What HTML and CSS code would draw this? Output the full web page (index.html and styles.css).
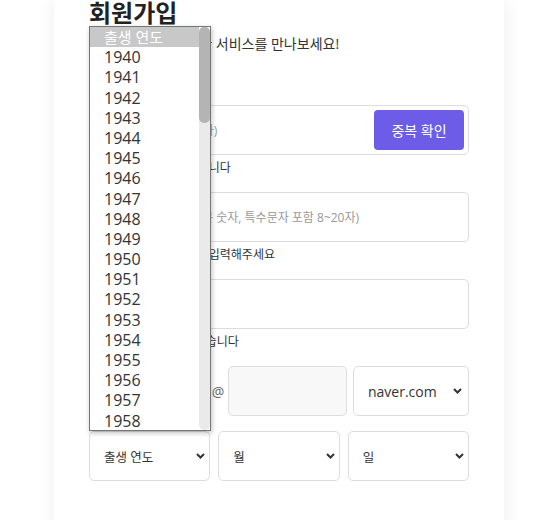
FILE: index.html
```html
<!DOCTYPE html>
<html lang="ko">
<head>
<meta charset="utf-8">
<title>회원가입</title>
<link rel="stylesheet" href="styles.css">
</head>
<body>
<div class="page">
  <div class="card">
    <h1 class="title">회원가입</h1>
    <p class="subtitle">지금 가입하고 다양한 서비스를 만나보세요!</p>

    <div class="field field-first">
      <div class="input-box">
        <input class="text-input" type="text" placeholder="아이디 입력 (6 ~ 20자)">
        <button class="check-btn" type="button">중복 확인</button>
      </div>
      <p class="help">사용할 수 있는 아이디입니다</p>
    </div>

    <div class="field">
      <div class="input-box">
        <input class="text-input" type="password" placeholder="비밀번호를 입력 (영문 숫자, 특수문자 포함 8~20자)">
      </div>
      <p class="help">안전한 비밀번호 조합을 입력해주세요</p>
    </div>

    <div class="field">
      <div class="input-box">
        <input class="text-input" type="password" placeholder="비밀번호 재입력">
      </div>
      <p class="help">비밀번호가 일치하지 않습니다</p>
    </div>

    <div class="email-row">
      <div class="input-box email-id"></div>
      <span class="at">@</span>
      <div class="input-box email-domain"></div>
      <div class="select select-domain">
        <span>naver.com</span>
        <svg class="chev" width="9" height="6" viewBox="0 0 9 6"><polyline points="1,1 4.5,4.5 8,1" fill="none" stroke="#333" stroke-width="2"/></svg>
      </div>
    </div>

    <div class="birth-row">
      <div class="select">
        <span>출생 연도</span>
        <svg class="chev" width="9" height="6" viewBox="0 0 9 6"><polyline points="1,1 4.5,4.5 8,1" fill="none" stroke="#333" stroke-width="2"/></svg>
      </div>
      <div class="select">
        <span>월</span>
        <svg class="chev" width="9" height="6" viewBox="0 0 9 6"><polyline points="1,1 4.5,4.5 8,1" fill="none" stroke="#333" stroke-width="2"/></svg>
      </div>
      <div class="select">
        <span>일</span>
        <svg class="chev" width="9" height="6" viewBox="0 0 9 6"><polyline points="1,1 4.5,4.5 8,1" fill="none" stroke="#333" stroke-width="2"/></svg>
      </div>
    </div>

    <div class="listbox">
      <ul class="options">
        <li class="option selected">출생 연도</li>
        <li class="option">1940</li>
        <li class="option">1941</li>
        <li class="option">1942</li>
        <li class="option">1943</li>
        <li class="option">1944</li>
        <li class="option">1945</li>
        <li class="option">1946</li>
        <li class="option">1947</li>
        <li class="option">1948</li>
        <li class="option">1949</li>
        <li class="option">1950</li>
        <li class="option">1951</li>
        <li class="option">1952</li>
        <li class="option">1953</li>
        <li class="option">1954</li>
        <li class="option">1955</li>
        <li class="option">1956</li>
        <li class="option">1957</li>
        <li class="option">1958</li>
        <li class="option">1959</li>
      </ul>
      <div class="scrollbar"><div class="thumb"></div></div>
    </div>
  </div>
</div>
</body>
</html>
```

FILE: styles.css
```css
html, body {
  margin: 0;
  padding: 0;
  background: #fff;
  overflow: hidden;
}

body {
  font-family: "Open Sans", "Noto Sans CJK KR", sans-serif;
  color: #333;
}

.page {
  height: 520px;
  overflow: hidden;
  padding-left: 54px;
}

.card {
  position: relative;
  width: 450px;
  min-height: 560px;
  box-sizing: border-box;
  padding: 0 35px 40px;
  background: #fff;
  box-shadow: 0 0 18px rgba(0, 0, 0, 0.07);
}

.title {
  margin: 0;
  font-size: 24px;
  line-height: 26px;
  font-weight: 700;
  color: #222;
}

.subtitle {
  margin: 9px 0 0;
  font-size: 14px;
  line-height: 18px;
  color: #333;
}

.field {
  margin-top: 17px;
}

.field-first {
  margin-top: 52px;
}

.input-box {
  display: flex;
  align-items: center;
  height: 50px;
  box-sizing: border-box;
  border: 1px solid #ddd;
  border-radius: 5px;
  padding: 0 4px 0 14px;
  background: #fff;
}

.text-input {
  flex: 1;
  min-width: 0;
  border: none;
  outline: none;
  background: transparent;
  padding: 0;
  font-family: "Open Sans", "Noto Sans CJK KR", sans-serif;
  font-size: 12px;
  color: #333;
}

.text-input::placeholder {
  color: #999;
}

.check-btn {
  width: 90px;
  height: 40px;
  border: none;
  border-radius: 4px;
  background: #6c5ce7;
  color: #fff;
  font-family: "Open Sans", "Noto Sans CJK KR", sans-serif;
  font-size: 14px;
  padding: 0;
}

.help {
  margin: 6px 0 0;
  font-size: 12px;
  line-height: 14px;
  color: #333;
}

.email-row {
  display: flex;
  height: 50px;
  margin-top: 17px;
}

.email-id {
  width: 119px;
  flex: none;
}

.at {
  width: 20px;
  flex: none;
  display: flex;
  align-items: center;
  justify-content: center;
  font-size: 14px;
  color: #666;
}

.email-domain {
  width: 119px;
  flex: none;
  background: #f8f8f8;
}

.select {
  display: flex;
  align-items: center;
  justify-content: space-between;
  height: 50px;
  box-sizing: border-box;
  border: 1px solid #ddd;
  border-radius: 5px;
  padding: 0 4px 0 14px;
  background: #fff;
  font-size: 12.5px;
  color: #333;
}

.select-domain {
  width: 116px;
  flex: none;
  margin-left: 6px;
  padding-right: 6px;
  font-size: 14px;
}

.chev {
  display: block;
  flex: none;
}

.birth-row {
  display: grid;
  grid-template-columns: 1fr 1fr 1fr;
  gap: 8px;
  margin-top: 15px;
}

.listbox {
  position: absolute;
  left: 35px;
  top: 26px;
  width: 122px;
  height: 405px;
  box-sizing: border-box;
  border: 1px solid #767676;
  background: #fff;
  display: flex;
  box-shadow: 1px 2px 5px rgba(0, 0, 0, 0.25);
  overflow: hidden;
}

.options {
  flex: 1;
  margin: 0;
  padding: 0;
  list-style: none;
  overflow: hidden;
}

.option {
  height: 20.2px;
  line-height: 20.2px;
  padding-left: 14px;
  font-size: 16px;
  color: #333;
  white-space: nowrap;
}

.option.selected {
  background: #c8c8c8;
  color: #fff;
  font-size: 15px;
}

.scrollbar {
  width: 11px;
  flex: none;
  background: #eaeaea;
  border-radius: 5px;
}

.thumb {
  height: 96px;
  background: #b4b4b4;
  border-radius: 5px;
}
```
